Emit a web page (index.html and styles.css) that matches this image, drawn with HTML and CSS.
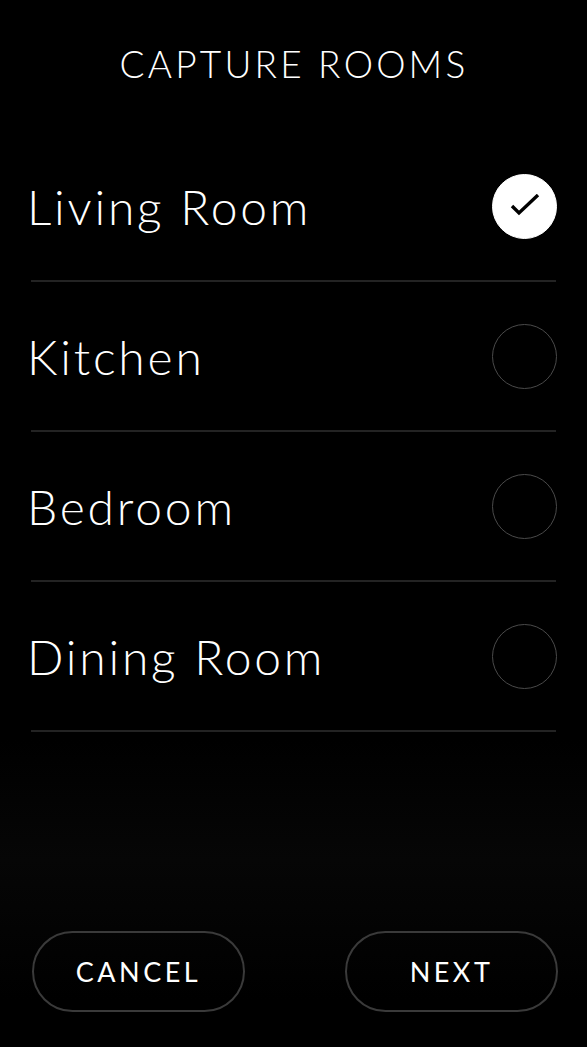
FILE: index.html
```html
<!DOCTYPE html>
<html lang="en">
	<head>
		<meta charset="utf-8">
		<meta name="viewport" content="width=device-width, initial-scale=1">
		<title>Capture Rooms</title>
		<link rel="stylesheet" href="styles.css">
	</head>
	<body>
		<div class="screen">
			<header class="top">
				<h1 class="title">CAPTURE ROOMS</h1>
			</header>
			<ul class="rooms">
				<li class="room">
					<span class="room-name">Living Room</span>
					<span class="tick checked">
						<svg width="30" height="24" viewBox="0 0 30 24"><path d="M2 12 L9 19 L28 1" fill="none" stroke="#000" stroke-width="3.4"/></svg>
					</span>
				</li>
				<li class="room">
					<span class="room-name">Kitchen</span>
					<span class="tick"></span>
				</li>
				<li class="room">
					<span class="room-name">Bedroom</span>
					<span class="tick"></span>
				</li>
				<li class="room">
					<span class="room-name">Dining Room</span>
					<span class="tick"></span>
				</li>
			</ul>
			<footer class="actions">
				<button class="btn">CANCEL</button>
				<button class="btn">NEXT</button>
			</footer>
		</div>
	</body>
</html>
```

FILE: styles.css
```css
body {
	margin: 0;
	background: #000;
	color: #fff;
	font-family: Lato, "Open Sans", sans-serif;
	font-weight: 300;
}
.screen {
	height: 1047px;
	display: flex;
	flex-direction: column;
	background: linear-gradient(#000 0, #000 740px, #060606 860px, #000 1000px);
}
.top {
	height: 132px;
	display: flex;
	justify-content: center;
}
.title {
	margin: 42px 0 0 1px;
	font-size: 37px;
	font-weight: 300;
	letter-spacing: 3.2px;
	line-height: 44px;
}

/* room list */
.rooms {
	list-style-type: none;
	margin: 0 31px;
	padding: 0;
}
.room {
	height: 148px;
	border-bottom: 2px solid #232323;
	display: flex;
	align-items: center;
	justify-content: space-between;
}
.room-name {
	margin-left: -4px;
	font-size: 48px;
	letter-spacing: 2.8px;
}
.tick {
	width: 63px;
	height: 63px;
	margin-right: -1px;
	border: 1.5px solid #4a4a4a;
	border-radius: 50%;
	display: flex;
	align-items: center;
	justify-content: center;
}
.tick.checked {
	background: #fff;
	border-color: #fff;
}

/* bottom buttons */
.actions {
	margin-top: auto;
	padding: 0 29px 35px 32px;
	display: flex;
	justify-content: space-between;
}
.btn {
	width: 213px;
	height: 81px;
	padding: 0;
	border: 2px solid #3a3a3a;
	border-radius: 41px;
	background: transparent;
	color: #fff;
	font-family: inherit;
	font-weight: 400;
	font-size: 27px;
	letter-spacing: 3.5px;
}
```
